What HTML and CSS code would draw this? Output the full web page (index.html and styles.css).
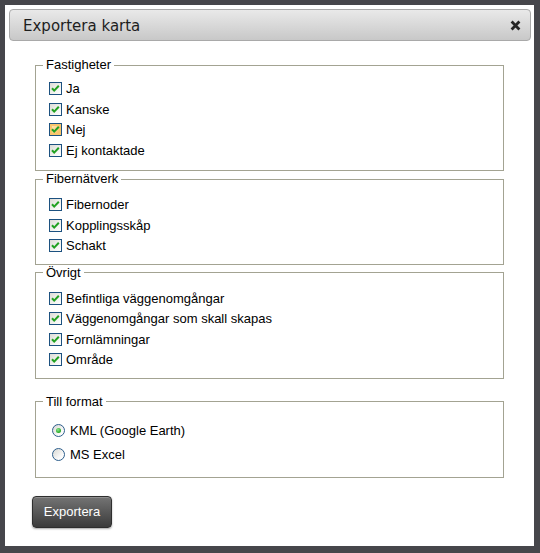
FILE: index.html
```html
<!DOCTYPE html>
<html lang="sv">
<head>
<meta charset="utf-8">
<title>Exportera karta</title>
<link rel="stylesheet" href="styles.css">
</head>
<body>
<div class="dialog">
  <div class="titlebar">
    <span class="title">Exportera karta</span>
    <svg class="close" width="11" height="11" viewBox="0 0 11 11"><path d="M1.6 1.6L9.4 9.4M9.4 1.6L1.6 9.4" stroke="#262626" stroke-width="2.8" stroke-linecap="butt"/></svg>
  </div>
  <div class="body">
    <fieldset class="group first">
      <legend>Fastigheter</legend>
      <label class="row"><span class="cb"><svg viewBox="0 0 11 11"><path d="M2 5.2L4.2 7.6L8.8 2.8"/></svg></span>Ja</label>
      <label class="row"><span class="cb"><svg viewBox="0 0 11 11"><path d="M2 5.2L4.2 7.6L8.8 2.8"/></svg></span>Kanske</label>
      <label class="row"><span class="cb hot"><svg viewBox="0 0 11 11"><path d="M2 5.2L4.2 7.6L8.8 2.8"/></svg></span>Nej</label>
      <label class="row"><span class="cb"><svg viewBox="0 0 11 11"><path d="M2 5.2L4.2 7.6L8.8 2.8"/></svg></span>Ej kontaktade</label>
    </fieldset>
    <fieldset class="group">
      <legend>Fibernätverk</legend>
      <label class="row"><span class="cb"><svg viewBox="0 0 11 11"><path d="M2 5.2L4.2 7.6L8.8 2.8"/></svg></span>Fibernoder</label>
      <label class="row"><span class="cb"><svg viewBox="0 0 11 11"><path d="M2 5.2L4.2 7.6L8.8 2.8"/></svg></span>Kopplingsskåp</label>
      <label class="row"><span class="cb"><svg viewBox="0 0 11 11"><path d="M2 5.2L4.2 7.6L8.8 2.8"/></svg></span>Schakt</label>
    </fieldset>
    <fieldset class="group">
      <legend>Övrigt</legend>
      <label class="row"><span class="cb"><svg viewBox="0 0 11 11"><path d="M2 5.2L4.2 7.6L8.8 2.8"/></svg></span>Befintliga väggenomgångar</label>
      <label class="row"><span class="cb"><svg viewBox="0 0 11 11"><path d="M2 5.2L4.2 7.6L8.8 2.8"/></svg></span>Väggenomgångar som skall skapas</label>
      <label class="row"><span class="cb"><svg viewBox="0 0 11 11"><path d="M2 5.2L4.2 7.6L8.8 2.8"/></svg></span>Fornlämningar</label>
      <label class="row"><span class="cb"><svg viewBox="0 0 11 11"><path d="M2 5.2L4.2 7.6L8.8 2.8"/></svg></span>Område</label>
    </fieldset>
    <fieldset class="group format">
      <legend>Till format</legend>
      <label class="row radio-row"><span class="radio checked"></span>KML (Google Earth)</label>
      <label class="row radio-row"><span class="radio"></span>MS Excel</label>
    </fieldset>
    <button class="btn" type="button">Exportera</button>
  </div>
</div>
</body>
</html>
```

FILE: styles.css
```css
html, body {
  margin: 0;
  padding: 0;
}
body {
  background: #46464b;
  width: 540px;
  height: 553px;
  overflow: hidden;
  font-family: "Liberation Sans", Arial, sans-serif;
  font-size: 13px;
  color: #000;
}
.dialog {
  box-sizing: border-box;
  margin: 5px 0 0 5px;
  width: 529px;
  height: 541px;
  background: #fff;
  padding: 4px 3px 0 4px;
}
.titlebar {
  box-sizing: border-box;
  height: 32px;
  border: 1px solid #a9a9a9;
  border-radius: 4px;
  background: linear-gradient(#e9e9e9, #c8c8c8);
  display: flex;
  align-items: center;
  justify-content: space-between;
  padding: 0 9px 0 13px;
}
.title {
  font-family: "DejaVu Sans", Verdana, sans-serif;
  font-size: 15px;
  color: #1e1e1e;
  line-height: 18px;
  padding-top: 1px;
}
.close {
  display: block;
  margin-top: 1px;
}
.body {
  padding: 16px 27px 0 23px;
}
.group {
  margin: 0 0 0 3px;
  padding: 8px 13px 7px 13px;
  border: 1px solid #a3a392;
  min-width: 0;
}
.group.first {
  padding-top: 6px;
  padding-bottom: 9px;
}
.group legend {
  padding: 0 3px;
  margin-left: -6px;
  line-height: 16px;
  font-size: 13px;
}
.row {
  display: flex;
  align-items: flex-start;
  height: 20.5px;
  line-height: 20px;
  white-space: nowrap;
}
.cb {
  box-sizing: border-box;
  flex: none;
  width: 13px;
  height: 13px;
  margin: 3px 4px 0 0;
  border: 1px solid #1c5180;
  background: linear-gradient(135deg, #dcdcd6, #f6f6f4 70%, #fff);
  display: block;
}
.cb.hot {
  background: linear-gradient(135deg, #fff0c8, #f8b550);
  box-shadow: inset 0 0 0 2px #f9c66c;
}
.cb svg {
  display: block;
  width: 11px;
  height: 11px;
}
.cb path {
  fill: none;
  stroke: #21a121;
  stroke-width: 2;
}
.format {
  margin-top: 15px;
  padding-top: 9px;
  padding-bottom: 10px;
}
.radio-row {
  height: 24px;
  line-height: 24px;
  align-items: center;
}
.radio {
  box-sizing: border-box;
  flex: none;
  width: 13px;
  height: 13px;
  margin: 0 5px 0 3px;
  border-radius: 50%;
  border: 1px solid #2d5e8c;
  background: linear-gradient(135deg, #d8d8d2, #fafafa 70%, #fff);
  position: relative;
}
.radio.checked::after {
  content: "";
  position: absolute;
  left: 3px;
  top: 3px;
  width: 5px;
  height: 5px;
  border-radius: 50%;
  background: radial-gradient(circle at 40% 35%, #8ee88e, #22a622 70%);
}
.btn {
  display: block;
  margin-top: 18px;
  width: 80px;
  height: 32px;
  border: 1px solid #2e2e2e;
  border-radius: 4px;
  background: linear-gradient(#747474, #3b3b3b);
  box-shadow: inset 0 1px 0 rgba(255,255,255,0.2), 0 1px 2px rgba(0,0,0,0.35);
  color: #fff;
  font-family: "Liberation Sans", Arial, sans-serif;
  font-size: 13px;
  padding: 0;
}
```
